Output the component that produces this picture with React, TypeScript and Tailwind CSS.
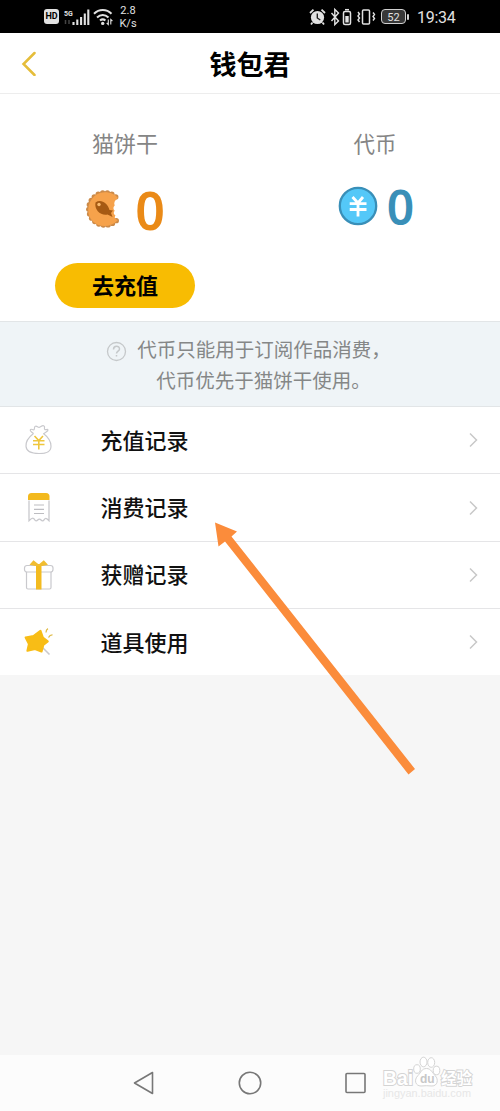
import type { ReactNode } from "react";

function StatusBar() {
  return (
    <div className="flex h-[33px] items-center bg-black font-['Roboto','Noto_Sans',sans-serif] text-[#e2e2e2]">
      <div className="ml-[44px] flex h-[15px] w-[15px] items-center justify-center rounded-[3px] bg-[#e2e2e2] text-[9px] font-bold text-black">HD</div>
      <svg className="ml-[4px] h-[20px] w-[27px]" viewBox="0 0 27 20" fill="none" stroke="#e2e2e2">
        <text x="1" y="8.500" fontSize="7" fontWeight="700" fill="#e2e2e2" stroke="none">5G</text>
        <path d="M2.500 13v4M6 13v4" stroke="#444" strokeWidth="1.500" />
        <path d="M10.500 18v-3M14.300 18v-5.500M18.100 18v-8M21.800 18v-11.500M25.300 18v-15.500" strokeWidth="2.100" />
      </svg>
      <svg className="ml-[3px] h-[18px] w-[20px]" viewBox="0 0 20 18" fill="none" stroke="#e2e2e2" strokeWidth="2">
        <path d="M1 5.800c5-5 12.500-5 17.500 0M4 9.500c3.500-3.200 8-3.200 11.500 0M7 12.600c1.700-1.500 3.700-1.500 5.400 0" />
        <circle cx="9.700" cy="15.400" r="1.700" fill="#e2e2e2" stroke="none" />
        <path d="M15.300 11.500v5l-1.600-1.500M17.800 16.500v-5l1.600 1.500" strokeWidth="1.100" />
      </svg>
      <div className="ml-[5px] w-[20px] text-center text-[11px] leading-[13px]">
        <div>2.8</div>
        <div>K/s</div>
      </div>
      <svg className="ml-[169px] h-[20px] w-[70px]" viewBox="0 0 70 20" fill="none" stroke="#e2e2e2" strokeWidth="1.500">
        <circle cx="10.500" cy="10.500" r="6.600" fill="#e2e2e2" stroke="none" />
        <path d="M3 6l3.500-3.300M18 6l-3.500-3.300M5.500 15.500l-1.500 2M15.500 15.500l1.500 2" strokeWidth="1.800" />
        <path d="M10.300 6.500v4.500l3 2" stroke="#222" strokeWidth="1.400" />
        <path d="M24.500 6l7 8-3.700 3.500v-15L31.500 6l-7 8" strokeWidth="1.400" />
        <rect x="36.500" y="4.500" width="7" height="13" rx="1.500" />
        <path d="M38 2.700h4" />
        <rect x="38.300" y="9" width="3.400" height="6.500" fill="#e2e2e2" stroke="none" />
        <rect x="55.500" y="3" width="7" height="14" rx="1" />
        <path d="M51 5l1.500 2-1.500 2 1.500 2-1.500 2 1.500 2M66 5.500l1.500 2-1.500 2 1.500 2-1.500 2" strokeWidth="1.400" />
      </svg>
      <div className="ml-[4px] flex h-[15px] w-[25px] items-center justify-center rounded-[4px] border border-[#d0d0d0] bg-[#383838] pt-[1px] text-[11px] leading-none">52</div>
      <div className="ml-[1px] h-[6px] w-[2px] rounded bg-[#d0d0d0]" />
      <div className="mt-[2px] ml-[8px] text-[16px] leading-[20px] tracking-[-0.300px]">19:34</div>
    </div>
  );
}

function CookieIcon() {
  const scallops = Array.from({ length: 17 }, (_, i) => 46 + i * 16.6);
  return (
    <svg className="h-[40px] w-[36px]" viewBox="0 0 36 40">
      {scallops.map((deg) => (
        <circle key={deg} cx={20 + 16.200 * Math.cos((deg * Math.PI) / 180)} cy={20 + 16.200 * Math.sin((deg * Math.PI) / 180)} r="2.700" fill="#cc8a48" />
      ))}
      <path d="M33 9C28 2.500 16 1 9 7.500S1 26 8 32.500s18 6 25-1.500c-3-.5-4-2.500-2.500-4.500-2-1-2.300-3-.8-4.700-1.700-1.500-1.700-4 0-5.300-1.200-2.500 0-5.500 3.300-7.500z" fill="#f6a24b" />
      <path d="M10.500 13.500c5.500-3.800 12 .5 14 7.500l3.500.5-2 2.500 1.500 4-5-2.500c-6.500 1.500-13.500-4.500-12-12z" fill="#a65a13" />
      <circle cx="14" cy="15.500" r="1.700" fill="#f9bb70" />
    </svg>
  );
}

function TokenIcon() {
  return (
    <svg className="h-[40px] w-[40px]" viewBox="0 0 40 40">
      <circle cx="20" cy="20" r="18.200" fill="#54c8f8" stroke="#398fb8" strokeWidth="2.300" />
      <path d="M14.500 11l5.500 6 5-6M11.700 17.700h16.800M11.700 23.500h16.800M20 17v13.500" fill="none" stroke="#fff" strokeWidth="2.800" />
    </svg>
  );
}

const bag = (
  <g fill="none" stroke="#c9c9cd" strokeWidth="1.200">
    <path d="M14.500 11.500c-2-1.500-4-3-3-4 1-1 2.200.8 3.500.2.900-.6-.2-3 1.400-3.500 1.600-.6 2.400 1.500 4 1.100 1.600-.5 3-2.400 4.600-1.300 1.600 1-.5 2.700.8 3.500 1 .7 2.700-.8 3.200.4.500 1.500-3.700 2.500-4.600 4.100" />
    <path d="M14.500 11.500c-4.500 3.500-7.800 8.500-7.500 12.700.4 7 8 7.300 13 7.300s12-.4 12-7.300c0-4.700-3-9.200-7.600-12.700" />
    <path d="M15.500 14l4.300 4.500 4.200-4.500M14 18.800h11.500M14 22.500h11.500M19.800 18.500v9" stroke="#efc63c" strokeWidth="1.600" />
  </g>
);

const receipt = (
  <g fill="none" transform="translate(0.500 -1.500)">
    <path d="M9.500 12v20.300c2-2 3-3 4.300-2.500 1.500.5 1 2.500 2.800 2.500s1.500-1.700 3.300-1.700 1.500 1.700 3.200 1.700 1.500-2.500 3.200-2.500c1.300 0 2.200 1.500 3.200 2.500V12" stroke="#c9c9cd" strokeWidth="1.300" />
    <path d="M8.500 11.500V8q0-3.500 3.500-3.500h14.500q3.500 0 3.500 3.500v3.500z" fill="#f3b91d" />
    <path d="M14.500 16.500h10M14.500 20.800h10M14.500 25h10" stroke="#bdbdc1" strokeWidth="1.200" />
  </g>
);

const gift = (
  <g fill="none" stroke="#c9c9cd" strokeWidth="1.200">
    <rect x="5.500" y="8.500" width="28.500" height="6.500" rx="2.500" />
    <path d="M7.500 15V30.500q0 1.500 1.500 1.500h21.500q1.500 0 1.500-1.500V15" />
    <path d="M17 7h5.500v25.500H17z" fill="#f3bb20" stroke="none" />
    <path d="M10.500 7.800l4-4.500 5.300 4.200 5-4.200 4.200 4.500-5.700 1.200h-7z" fill="#f1bd30" stroke="none" />
  </g>
);

const wand = (
  <g fill="none">
    <path d="M23.500 23.500l7 7" stroke="#c9c9cd" strokeWidth="1.600" />
    <path d="M21.500 7L23.800 13.700 28.700 17.300 24.200 21 22.500 27.500 16 25 8.500 26.700 10 20 6.700 13.500 14.500 12.200z" fill="#f8bd16" stroke="#f8bd16" strokeWidth="2.200" strokeLinejoin="round" />
    <path d="M27 8.500c0-2 .7-3.200 2-3.800M29.500 13.500c1-2 2.200-2.800 4-2.700" stroke="#dfbb48" strokeWidth="1.300" />
  </g>
);

function Row({ icon, label, last }: { icon: ReactNode; label: string; last?: boolean }) {
  return (
    <div className={`flex items-center bg-white ${last ? "h-[66px]" : "h-[67.400px] border-b border-[#e5e5e7]"}`}>
      <svg className="ml-[19px] h-[36px] w-[40px]" viewBox="0 0 40 36">{icon}</svg>
      <span className="mb-[3px] ml-[41.500px] text-[22px] leading-[32px] font-medium text-[#111]">{label}</span>
      <svg className="mr-[20px] ml-auto h-[16px] w-[12px]" viewBox="0 0 12 16" fill="none" stroke="#c8c8c8" strokeWidth="1.500">
        <path d="M2 1.500L8.500 8 2 14.500" />
      </svg>
    </div>
  );
}

function Watermark() {
  return (
    <svg className="absolute top-[1052px] left-[378px] h-[52px] w-[104px]" viewBox="0 0 104 52" fill="#fff" stroke="#d4d4d4" strokeWidth="1">
      <path d="M48.500 16.500c4.500 0 6 4.500 8.500 7 4 4 2.500 10.500-3 10.500-4-.4-7.500-.4-11 0-5.500 0-7.500-6-3-10.500 3-3 3.500-7 8.500-7z" />
      <ellipse cx="39" cy="17" rx="3.300" ry="4.300" />
      <ellipse cx="45.500" cy="10" rx="3.500" ry="4.800" />
      <ellipse cx="53.200" cy="10.500" rx="3.500" ry="4.800" />
      <ellipse cx="58.500" cy="18.500" rx="3.300" ry="4.300" />
      <g fontFamily="Liberation Sans, sans-serif" fontWeight="700">
        <text x="5" y="33" fontSize="20" paintOrder="stroke" strokeWidth="2" textLength="30" lengthAdjust="spacingAndGlyphs">Bai</text>
        <text x="42" y="31" fontSize="12" fill="#c8c8c8" stroke="none">du</text>
        <text x="63" y="32" fontSize="16" fontFamily="Noto Sans CJK SC, sans-serif" paintOrder="stroke" strokeWidth="1.800" textLength="31" lengthAdjust="spacingAndGlyphs">经验</text>
      </g>
      <text x="5" y="45" fontSize="10" fontFamily="Liberation Sans, sans-serif" fill="#e7e7e7" stroke="none" textLength="88" lengthAdjust="spacingAndGlyphs">jingyan.baidu.com</text>
    </svg>
  );
}

export default function App() {
  return (
    <div className="relative flex h-[1111px] w-[500px] flex-col overflow-hidden bg-[#f6f6f6] font-['Noto_Sans_CJK_SC',sans-serif]">
      <StatusBar />
      <header className="grid h-[61px] shrink-0 grid-cols-3 items-center border-b border-[#ededed] bg-white">
        <svg className="ml-[21px] h-[26px] w-[16px]" viewBox="0 0 16 26" fill="none" stroke="#e5bd3a" strokeWidth="2.500" strokeLinecap="round">
          <path d="M13.500 3L2.500 14l11 11" />
        </svg>
        <h1 className="mt-[2px] text-center text-[27px] leading-[40px] font-bold text-black">钱包君</h1>
      </header>

      <section className="grid h-[227px] shrink-0 grid-cols-2 bg-white">
        <div className="flex flex-col items-center pt-[32px]">
          <span className="text-[22px] leading-[32px] text-[#858585]">猫饼干</span>
          <div className="mt-[23px] flex h-[55px] items-center">
            <CookieIcon />
            <span className="mt-[1px] ml-[14px] font-['Noto_Sans',sans-serif] text-[52px] leading-[55px] font-semibold text-[#ea8a17]">0</span>
          </div>
          <button className="mt-[27px] h-[45px] w-[140px] rounded-full bg-[#f8bc02] pb-[3px] text-[22px] leading-[32px] font-bold text-black">去充值</button>
        </div>
        <div className="flex flex-col items-center pt-[32px]">
          <span className="mt-px text-[21.500px] leading-[32px] text-[#858585]">代币</span>
          <div className="mt-[19px] flex h-[55px] items-center pl-[2px]">
            <TokenIcon />
            <span className="mt-[2px] ml-[9px] font-['Noto_Sans',sans-serif] text-[48px] leading-[55px] font-semibold text-[#398fb8]">0</span>
          </div>
        </div>
      </section>

      <section className="flex h-[86px] shrink-0 justify-center border-y border-[#e2e5e7] bg-[#eff4f7] pt-[11px] pr-[12px] text-[19.500px] leading-[31px] text-[#858787]">
        <svg className="mt-[8px] mr-[10px] ml-[9px] h-[21px] w-[21px]" viewBox="0 0 21 21" fill="none" stroke="#c5c8ca" strokeWidth="1.300">
          <circle cx="10.500" cy="10.500" r="9" />
          <path d="M7.500 8.500c0-4.300 6-4.100 6-.6 0 2.100-3 2.300-3 4.600M10.500 14v1.500" strokeWidth="1.500" />
        </svg>
        <div className="whitespace-nowrap">
          <div>代币只能用于订阅作品消费，</div>
          <div className="pl-[19px]">代币优先于猫饼干使用。</div>
        </div>
      </section>

      <main className="flex shrink-0 flex-col">
        <Row icon={bag} label="充值记录" />
        <Row icon={receipt} label="消费记录" />
        <Row icon={gift} label="获赠记录" />
        <Row icon={wand} label="道具使用" last />
      </main>

      <nav className="mt-auto flex h-[56px] shrink-0 items-center justify-center gap-[79px] bg-[#fcfcfc]">
        <svg className="h-[26px] w-[26px]" viewBox="0 0 26 26" fill="none" stroke="#777" strokeWidth="1.600" strokeLinejoin="round">
          <path d="M20.500 2.500v21L2.500 13z" />
        </svg>
        <svg className="h-[26px] w-[26px]" viewBox="0 0 26 26" fill="none" stroke="#777" strokeWidth="1.600">
          <circle cx="13" cy="13" r="10.700" />
        </svg>
        <svg className="h-[26px] w-[26px]" viewBox="0 0 26 26" fill="none" stroke="#777" strokeWidth="1.600">
          <rect x="4" y="3.500" width="19" height="19" rx="1" />
        </svg>
      </nav>

      <svg className="pointer-events-none absolute top-[515px] left-[205px] h-[270px] w-[220px]" viewBox="205 515 220 270">
        <path d="M215 522.500l22 9-5.500 5 183.500 232.500-6.500 5.500-183.500-233-6.500 5z" fill="#fb8c3b" />
      </svg>
      <Watermark />
    </div>
  );
}
